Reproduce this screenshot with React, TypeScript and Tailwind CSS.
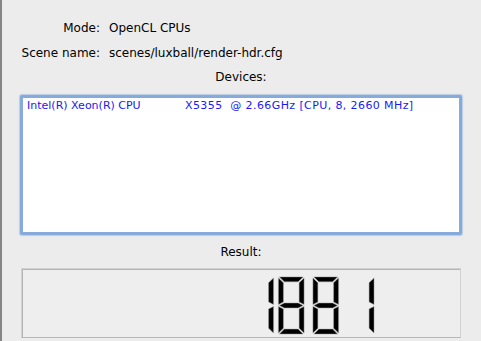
import React from 'react';

const FONT = { fontFamily: '"DejaVu Sans", "Lucida Grande", sans-serif' };

// 7-segment digit as polygons (x, y = top-left of the cell)
const segPolys = (x: number, y: number, segs: string) => {
  const w = 26;
  const h = 58;
  const t = 5;
  const m = y + h / 2;
  const P: Record<string, number[][]> = {
    a: [[x + 1, y], [x + w - 1, y], [x + w - 1 - t, y + t], [x + 1 + t, y + t]],
    b: [[x + w, y + 1], [x + w, m - 1], [x + w - t, m - 1 - t / 2], [x + w - t, y + 1 + t]],
    c: [[x + w, m + 1], [x + w, y + h - 1], [x + w - t, y + h - 1 - t], [x + w - t, m + 1 + t / 2]],
    d: [[x + 1, y + h], [x + w - 1, y + h], [x + w - 1 - t, y + h - t], [x + 1 + t, y + h - t]],
    e: [[x, m + 1], [x, y + h - 1], [x + t, y + h - 1 - t], [x + t, m + 1 + t / 2]],
    f: [[x, y + 1], [x, m - 1], [x + t, m - 1 - t / 2], [x + t, y + 1 + t]],
    g: [
      [x + 1, m], [x + 1 + t, m - t / 2], [x + w - 1 - t, m - t / 2],
      [x + w - 1, m], [x + w - 1 - t, m + t / 2], [x + 1 + t, m + t / 2],
    ],
  };
  return segs.split('').map((s) => P[s].map((p) => p.join(',')).join(' '));
};

const DIGITS = [
  { x: 225, segs: 'bc' },
  { x: 256, segs: 'abcdefg' },
  { x: 291, segs: 'abcdefg' },
  { x: 327, segs: 'bc' },
];

const LcdNumber = () => (
  <svg viewBox="0 0 437 68" className="block w-full h-full">
    {DIGITS.map((d, i) =>
      segPolys(d.x, 7, d.segs).map((pts, j) => (
        <polygon key={`${i}-${j}`} points={pts} fill="#000" stroke="#9a9a9a" strokeWidth="0.5" />
      ))
    )}
  </svg>
);

export default function App() {
  return (
    <div className="w-[481px] h-[341px] bg-[#ececec] flex overflow-hidden text-black" style={FONT}>
      {/* window edge behind */}
      <div className="w-[2px] h-full bg-[#858585]" />

      <div className="flex-1 flex flex-col pt-[15px] pl-[18px] pr-[19px]">
        <div className="grid grid-cols-[80px_1fr] gap-x-[9px] -ml-[18px] pl-[18px] text-[12px]">
          <div className="h-[25px] flex items-center justify-end">Mode:</div>
          <div className="h-[25px] flex items-center">OpenCL CPUs</div>
          <div className="h-[25px] flex items-center justify-end">Scene name:</div>
          <div className="h-[25px] flex items-center">scenes/luxball/render-hdr.cfg</div>
        </div>

        <div className="mt-[4px] h-[16px] leading-[16px] text-[12px] text-center">Devices:</div>

        <div className="mt-[10px] h-[140px] rounded-[2px] border-[3px] border-[#86abdb] bg-white shadow-[0_0_1px_1px_rgba(126,166,216,0.45)]">
          <div className="pl-[4px] pt-[1px] h-[14px] leading-[14px] text-[11px] text-[#1a1af0] whitespace-pre flex">
            <span className="w-[158px]">Intel(R) Xeon(R) CPU</span>
            <span className="tracking-[0.4px]">{'X5355  @ 2.66GHz [CPU, 8, 2660 MHz]'}</span>
          </div>
        </div>

        <div className="mt-[9px] h-[16px] leading-[16px] text-[12px] text-center">Result:</div>

        <div className="mt-[8px] mx-[1px] h-[70px] border border-[#d2d2d2] border-b-[#b8b8b8]">
          <div className="w-full h-full border-t border-l border-[#b4b4b4] bg-[#eeeeee]">
            <LcdNumber />
          </div>
        </div>
      </div>
    </div>
  );
}
